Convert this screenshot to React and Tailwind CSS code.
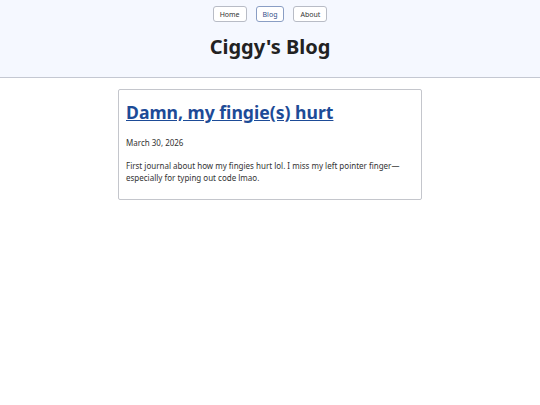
const links = ['Home', 'Blog', 'About']

export default function App() {
  return (
    <div className="min-h-screen bg-white text-[#222]" style={{ fontFamily: '"Noto Sans", sans-serif' }}>
      <header className="bg-[#f5f8ff] border-b border-[#c4c8d2] pt-[6px] pb-[20px]">
        <nav className="flex justify-center gap-[9px]">
          {links.map((l) => (
            <a
              key={l}
              href="#"
              className={`h-[16px] px-[6px] flex items-center rounded-[3px] border text-[7px] leading-none bg-white ${
                l === 'Blog' ? 'border-[#8a9ec4] text-[#2f4f8a]' : 'border-[#b8bcc6] text-[#333]'
              }`}
            >
              {l}
            </a>
          ))}
        </nav>
        <h1 className="text-center text-[20px] font-bold leading-none mt-[15px]">Ciggy's Blog</h1>
      </header>
      <main className="flex justify-center pt-[11px]">
        <article className="w-[304px] border border-[#c4c6cc] rounded-[2px] px-[7px] pt-[11px] pb-[15px]">
          <h2 className="text-[17.6px] font-bold leading-tight">
            <a href="#" className="text-[#1d4b97] underline">Damn, my fingie(s) hurt</a>
          </h2>
          <p className="text-[8px] leading-[12px] mt-[14px] text-[#333]">March 30, 2026</p>
          <p className="text-[8px] mt-[11px] leading-[12px] text-[#333]">
            First journal about how my fingies hurt lol. I miss my left pointer finger—especially for typing out code lmao.
          </p>
        </article>
      </main>
    </div>
  )
}
